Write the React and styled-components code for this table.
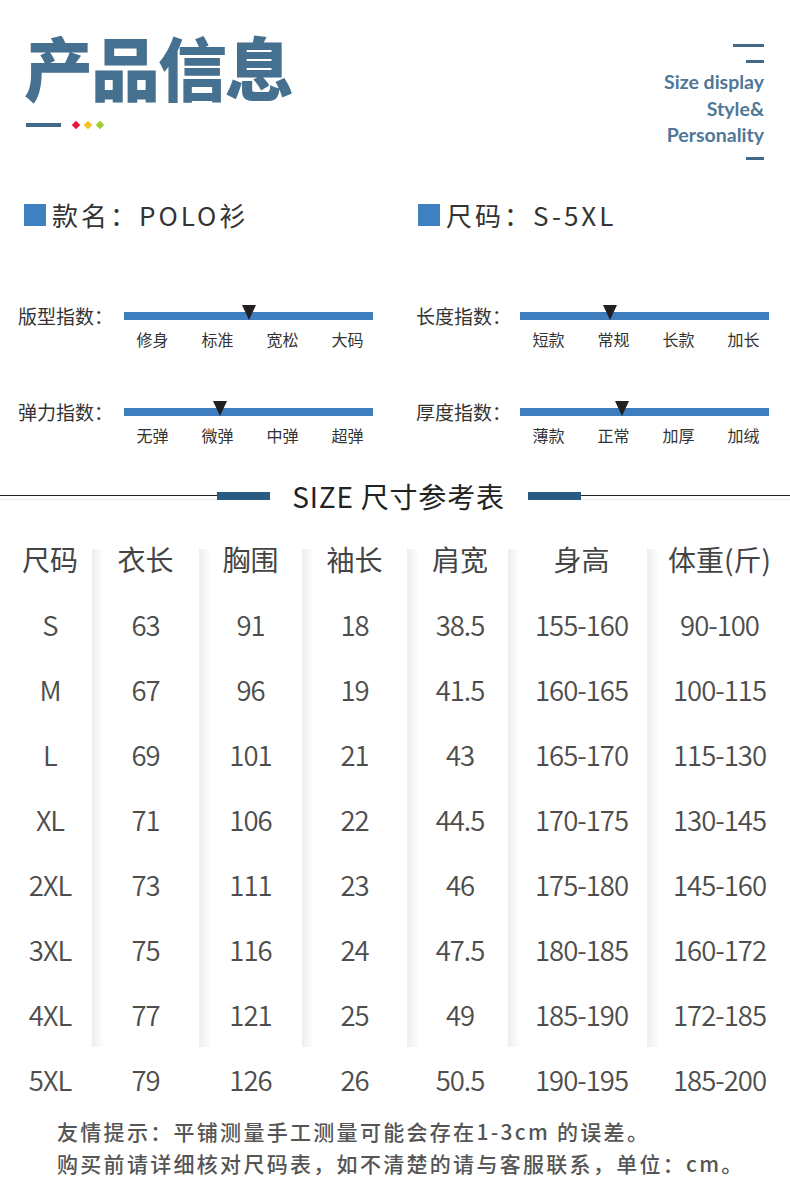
import styled, { createGlobalStyle } from "styled-components";

const GlobalStyle = createGlobalStyle`
  body {
    margin: 0;
    background: #ffffff;
    font-family: "Noto Sans CJK SC", "Noto Sans", sans-serif;
  }
`;

const sliders = [
  { label: "版型指数：", ticks: ["修身", "标准", "宽松", "大码"], value: 50, right: false },
  { label: "长度指数：", ticks: ["短款", "常规", "长款", "加长"], value: 36, right: true },
  { label: "弹力指数：", ticks: ["无弹", "微弹", "中弹", "超弹"], value: 38.5, right: false },
  { label: "厚度指数：", ticks: ["薄款", "正常", "加厚", "加绒"], value: 41, right: true },
];

const columns = [
  { width: 92, shift: 8, head: "尺码", values: ["S", "M", "L", "XL", "2XL", "3XL", "4XL", "5XL"] },
  { width: 107, shift: 0, head: "衣长", values: ["63", "67", "69", "71", "73", "75", "77", "79"] },
  { width: 103, shift: 0, head: "胸围", values: ["91", "96", "101", "106", "111", "116", "121", "126"] },
  { width: 105, shift: 0, head: "袖长", values: ["18", "19", "21", "22", "23", "24", "25", "26"] },
  { width: 101, shift: 5, head: "肩宽", values: ["38.5", "41.5", "43", "44.5", "46", "47.5", "49", "50.5"] },
  { width: 139, shift: 8, head: "身高", values: ["155-160", "160-165", "165-170", "170-175", "175-180", "180-185", "185-190", "190-195"] },
  { width: 143, shift: 2, head: "体重(斤)", values: ["90-100", "100-115", "115-130", "130-145", "145-160", "160-172", "172-185", "185-200"] },
];

const App = () => {
  return (
    <Page>
      <GlobalStyle />
      <Header>
        <TitleBlock>
          <Title>产品信息</Title>
          <TitleMark>
            <MarkLine />
            <Diamond color="#e8173f" />
            <Diamond color="#f4c21b" />
            <Diamond color="#9ccf2e" />
          </TitleMark>
        </TitleBlock>
        <Tagline>
          <Dash width={31} />
          <Dash width={18} gap={13} />
          <TagText>
            Size display
            <br />
            Style&amp;
            <br />
            Personality
          </TagText>
          <Dash width={18} gap={8} />
        </Tagline>
      </Header>

      <InfoRow>
        <InfoItem>
          <InfoSquare />
          款名：POLO衫
        </InfoItem>
        <InfoItem>
          <InfoSquare />
          尺码：S-5XL
        </InfoItem>
      </InfoRow>

      <SliderGrid>
        {sliders.map((s) => (
          <Slider key={s.label}>
            <SliderTop>
              <SliderLabel right={s.right}>{s.label}</SliderLabel>
              <Track>
                <Marker style={{ left: `${s.value}%` }} />
              </Track>
            </SliderTop>
            <Ticks right={s.right}>
              {s.ticks.map((t) => (
                <Tick key={t}>{t}</Tick>
              ))}
            </Ticks>
          </Slider>
        ))}
      </SliderGrid>

      <Divider>
        <RuleLine extra={8} />
        <Accent />
        <DividerText>SIZE 尺寸参考表</DividerText>
        <Accent />
        <RuleLine />
      </Divider>

      <Table>
        {columns.map((col, i) => (
          <Column key={col.head} width={col.width} shaded={i > 0}>
            <HeadCell shift={col.shift}>{col.head}</HeadCell>
            {col.values.map((v, j) => (
              <Cell key={j} shift={col.shift}>
                {v}
              </Cell>
            ))}
          </Column>
        ))}
      </Table>

      <Notes>
        友情提示：平铺测量手工测量可能会存在1-3cm 的误差。
        <br />
        购买前请详细核对尺码表，如不清楚的请与客服联系，单位：cm。
      </Notes>
    </Page>
  );
};

export default App;

const Page = styled.div`
  width: 790px;
  min-height: 1189px;
  background: #ffffff;
  overflow: hidden;
`;

const Header = styled.header`
  display: flex;
  justify-content: space-between;
  align-items: flex-start;
  padding: 28px 26px 0 26px;
`;

const TitleBlock = styled.div`
  display: flex;
  flex-direction: column;
`;

const Title = styled.h1`
  margin: 0;
  margin-left: -2px;
  font-size: 69px;
  line-height: 76px;
  font-weight: 900;
  color: #46708f;
  letter-spacing: -2px;
`;

const TitleMark = styled.div`
  display: flex;
  align-items: center;
  gap: 6px;
  margin-top: 17px;
  height: 8px;
`;

const MarkLine = styled.span`
  width: 35px;
  height: 4px;
  background: #41698a;
  margin-right: 6px;
`;

const Diamond = styled.span`
  width: 6px;
  height: 6px;
  background: ${(p) => p.color};
  transform: rotate(45deg);
`;

const Tagline = styled.div`
  display: flex;
  flex-direction: column;
  align-items: flex-end;
  margin-top: 16px;
`;

const Dash = styled.span`
  display: block;
  width: ${(p) => p.width}px;
  height: 3px;
  margin-top: ${(p) => p.gap || 0}px;
  background: #41698a;
`;

const TagText = styled.div`
  margin-top: 6px;
  font-family: Lato, "Noto Sans", sans-serif;
  font-weight: 700;
  font-size: 19.5px;
  line-height: 26.5px;
  color: #4f7797;
  text-align: right;
`;

const InfoRow = styled.div`
  display: grid;
  grid-template-columns: 394px 1fr;
  padding-left: 24px;
  margin-top: 40px;
`;

const InfoItem = styled.div`
  display: flex;
  align-items: center;
  font-size: 26px;
  line-height: 30px;
  letter-spacing: 3px;
  color: #333333;
`;

const InfoSquare = styled.span`
  width: 22px;
  height: 22px;
  background: #3e80c0;
  margin-right: 6px;
`;

const SliderGrid = styled.div`
  display: grid;
  grid-template-columns: 398px 1fr;
  row-gap: 51px;
  padding-left: 18px;
  margin-top: 74px;
`;

const Slider = styled.div`
  display: flex;
  flex-direction: column;
`;

const SliderTop = styled.div`
  display: flex;
  align-items: center;
  height: 24px;
`;

const SliderLabel = styled.span`
  width: ${(p) => (p.right ? 104 : 106)}px;
  flex-shrink: 0;
  font-size: 19px;
  line-height: 24px;
  color: #333333;
`;

const Track = styled.div`
  position: relative;
  width: 249px;
  height: 8px;
  background: #3e7ebf;
`;

const Marker = styled.span`
  position: absolute;
  bottom: 0;
  margin-left: -7px;
  width: 0;
  height: 0;
  border-left: 7px solid transparent;
  border-right: 7px solid transparent;
  border-top: 15px solid #231f20;
`;

const Ticks = styled.div`
  display: grid;
  grid-template-columns: repeat(4, 65px);
  margin-left: ${(p) => (p.right ? 100 : 102)}px;
  margin-top: 1px;
`;

const Tick = styled.span`
  text-align: center;
  font-size: 16px;
  line-height: 20px;
  color: #333333;
`;

const Divider = styled.div`
  display: flex;
  align-items: center;
  margin-top: 46px;
  height: 10px;
`;

const RuleLine = styled.span`
  flex: 1 0 ${(p) => p.extra || 0}px;
  height: 3px;
  border-top: 1.5px solid #222222;
  border-bottom: 1px solid #e9e9e9;
  margin-top: 3px;
`;

const Accent = styled.span`
  width: 53px;
  height: 8px;
  background: #285b83;
`;

const DividerText = styled.span`
  margin: 0 23px 0 22px;
  font-size: 28px;
  line-height: 32px;
  letter-spacing: 0.8px;
  color: #222222;
`;

const Table = styled.div`
  display: flex;
  margin-top: 26px;
`;

const Column = styled.div`
  display: flex;
  flex-direction: column;
  width: ${(p) => p.width}px;
  flex-shrink: 0;
  background: ${(p) =>
    p.shaded
      ? "linear-gradient(to right, rgba(0,0,0,0.07), rgba(0,0,0,0) 12px) no-repeat 0 22px / 12px 498px"
      : "none"};
`;

const HeadCell = styled.div`
  height: 65px;
  display: flex;
  align-items: center;
  justify-content: center;
  padding-left: ${(p) => p.shift}px;
  font-size: 28px;
  color: #444444;
`;

const Cell = styled.div`
  height: 65px;
  display: flex;
  align-items: center;
  justify-content: center;
  padding-left: ${(p) => p.shift}px;
  font-size: 27.5px;
  letter-spacing: -1px;
  font-weight: 350;
  color: #4d4d4d;
`;

const Notes = styled.p`
  margin: 3px 0 0 57px;
  font-size: 21px;
  line-height: 32px;
  letter-spacing: 2.3px;
  font-weight: 500;
  color: #555555;
`;
